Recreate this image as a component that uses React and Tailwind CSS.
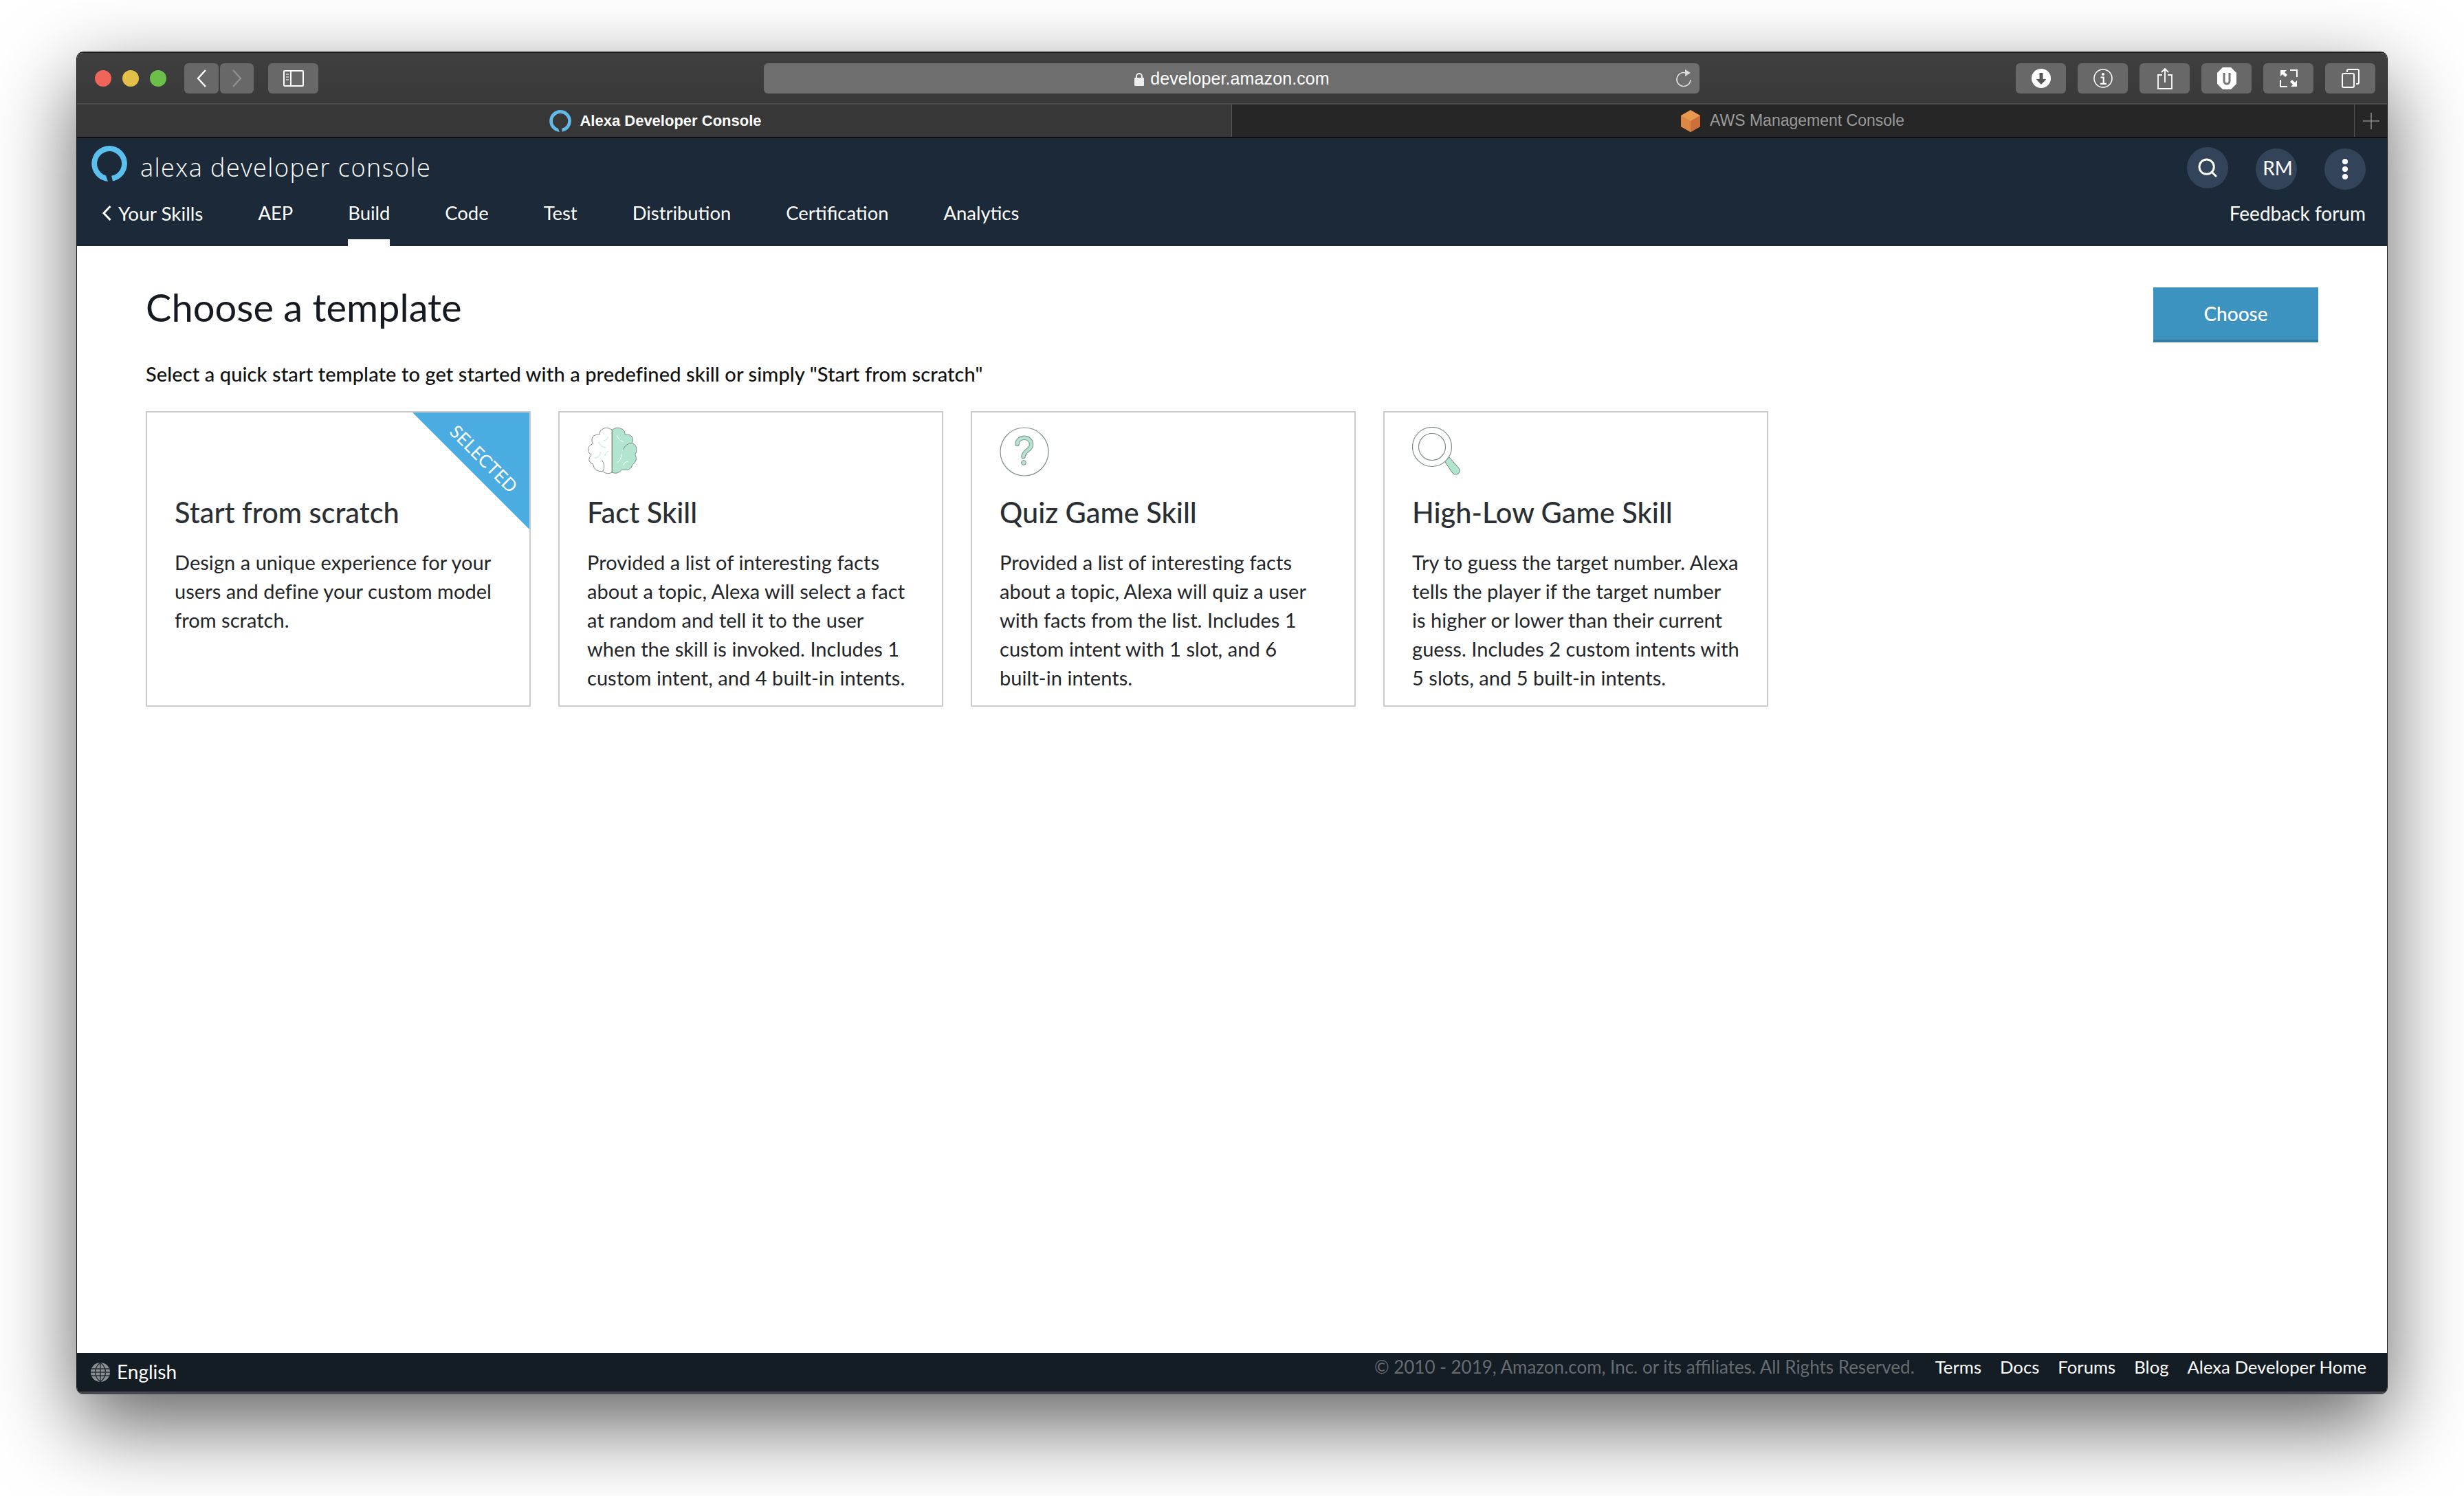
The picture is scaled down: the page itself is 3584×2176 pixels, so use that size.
import { Search } from 'lucide-react'

const NAV_ITEMS = ['AEP', 'Build', 'Code', 'Test', 'Distribution', 'Certification', 'Analytics']

const TEMPLATES = [
  {
    title: 'Start from scratch',
    selected: true,
    lines: ['Design a unique experience for your', 'users and define your custom model', 'from scratch.'],
  },
  {
    title: 'Fact Skill',
    icon: 'brain',
    lines: ['Provided a list of interesting facts', 'about a topic, Alexa will select a fact', 'at random and tell it to the user', 'when the skill is invoked. Includes 1', 'custom intent, and 4 built-in intents.'],
  },
  {
    title: 'Quiz Game Skill',
    icon: 'quiz',
    lines: ['Provided a list of interesting facts', 'about a topic, Alexa will quiz a user', 'with facts from the list. Includes 1', 'custom intent with 1 slot, and 6', 'built-in intents.'],
  },
  {
    title: 'High-Low Game Skill',
    icon: 'lens',
    lines: ['Try to guess the target number. Alexa', 'tells the player if the target number', 'is higher or lower than their current', 'guess. Includes 2 custom intents with', '5 slots, and 5 built-in intents.'],
  },
]

function AlexaRing({ className }) {
  return (
    <svg viewBox="0 0 52 52" className={className}>
      <path fill="currentColor" d="M26 0A26 26 0 0 1 31 51.500L29 43.800A18 18 0 1 0 21 43.300L24 51.900A26 26 0 0 1 26 0Z" />
    </svg>
  )
}

function BrainIcon() {
  return (
    <svg viewBox="160 95 222 208" className="h-[69px] w-[74px]">
      <path fill="#b2e5cf" stroke="#7f8c88" strokeWidth="3" d="M269 108 Q290 90 316 106 Q326 114 326 128 Q358 126 360 150 Q360 158 356 166 Q378 172 376 198 Q376 208 370 216 Q384 240 358 262 Q350 290 312 282 Q292 306 269 294 Z" />
      <path fill="#fff" stroke="#7f8c88" strokeWidth="3" d="M269 108 Q240 88 218 112 Q212 120 214 128 Q180 128 180 152 Q180 160 186 168 Q160 178 164 202 Q168 212 178 216 Q154 244 186 260 Q190 292 228 290 Q248 306 269 294 Z" />
      <path fill="none" stroke="#7f8c88" strokeWidth="3" d="M319 194 Q326 168 356 166 M228 290 Q242 264 224 240" />
      <path fill="none" stroke="#b2e5cf" strokeWidth="3" d="M232 154 Q246 154 252 138 M210 160 Q214 182 242 186 M218 204 Q218 228 192 232 M238 222 Q238 206 254 202" />
      <path fill="none" stroke="#fff" strokeWidth="3" d="M290 128 Q294 152 318 160 M310 214 Q310 242 292 250 M318 264 Q322 248 340 246" />
      <path fill="none" stroke="#7f8c88" strokeWidth="4" d="M269 106V296" />
    </svg>
  )
}

function QuizIcon() {
  return (
    <svg viewBox="0 0 72 72" className="h-[72px] w-[72px]">
      <circle cx="36" cy="36" r="35" fill="#fff" stroke="#7f8c88" strokeWidth="1.2" />
      <path fill="none" stroke="#7f8c88" strokeWidth="6.4" strokeLinecap="round" d="M25.5 25 C25.5 13 46 12 46 26 C46 34 35.5 34 34.5 43" />
      <path fill="none" stroke="#b2e5cf" strokeWidth="4.4" strokeLinecap="round" d="M25.5 25 C25.5 13 46 12 46 26 C46 34 35.5 34 34.5 43" />
      <circle cx="35" cy="52" r="3.4" fill="#b2e5cf" stroke="#7f8c88" strokeWidth="1" />
    </svg>
  )
}

function LensIcon() {
  return (
    <svg viewBox="0 0 72 72" className="h-[72px] w-[72px]">
      <path fill="#b2e5cf" stroke="#6f7f7a" strokeWidth="1" d="M46 48 L53 43 L68 60 Q71 64 67 68 Q62 71 58 66 Z" />
      <circle cx="29" cy="29" r="28.5" fill="#fff" stroke="#7f8c88" strokeWidth="1.2" />
      <circle cx="29" cy="29" r="19.5" fill="#fff" stroke="#7f8c88" strokeWidth="1.2" />
    </svg>
  )
}

function TemplateCard({ template }) {
  return (
    <div className="relative h-[430px] w-[560px] overflow-hidden border-2 border-[#cccccc] bg-white px-10 pt-[21px]">
      {template.selected && (
        <div className="absolute right-0 top-0 h-[170px] w-[170px] bg-[#4aace0] [clip-path:polygon(0_0,100%_0,100%_100%)]">
          <span className="absolute left-[19px] top-[54px] w-[170px] rotate-45 text-center text-[26px] leading-none tracking-[0.2px] text-white">SELECTED</span>
        </div>
      )}
      <div className="h-[72px]">
        {template.icon === 'brain' && <BrainIcon />}
        {template.icon === 'quiz' && <QuizIcon />}
        {template.icon === 'lens' && <LensIcon />}
      </div>
      <h3 className="mt-[28px] text-[41.5px] font-medium leading-[48px] text-[#2a2f33]">{template.title}</h3>
      <div className="mt-[28px] text-[29px] leading-[42px] tracking-[0.05px] text-[#1f2528]">
        {template.lines.map(line => (
          <p key={line} className="whitespace-nowrap">{line}</p>
        ))}
      </div>
    </div>
  )
}

function ToolButton({ children }) {
  return (
    <div className="flex h-[44px] w-[73px] items-center justify-center rounded-[6px] bg-[#686868]">
      {children}
    </div>
  )
}

export default function App() {
  return (
    <div className="h-[2176px] w-[3584px] overflow-hidden bg-white pl-[111px] pt-[75px] font-['Lato',sans-serif]">
      <div className="flex h-[1953px] w-[3362px] flex-col overflow-hidden rounded-[10px] border-x border-t-2 border-[#1a1a1a] shadow-[0_44px_120px_rgba(0,0,0,0.62)]">
        {/* safari toolbar */}
        <div className="flex h-[75px] shrink-0 items-center border-b-2 border-[#4c4c4c] bg-[linear-gradient(#3f3f3f,#393939)] pl-[26px] pr-[17px]">
          <div className="flex gap-[16px]">
            <span className="h-[24px] w-[24px] rounded-full bg-[#f0655a]" />
            <span className="h-[24px] w-[24px] rounded-full bg-[#e2bf49]" />
            <span className="h-[24px] w-[24px] rounded-full bg-[#6cbf48]" />
          </div>
          <div className="ml-[26px] flex gap-[2px]">
            <div className="flex h-[44px] w-[50px] items-center justify-center rounded-[6px] bg-[#686868]">
              <svg viewBox="0 0 16 26" className="h-[26px] w-[16px]"><path fill="none" stroke="#fff" strokeWidth="2.4" d="M14 1 3 13l11 12" /></svg>
            </div>
            <div className="flex h-[44px] w-[49px] items-center justify-center rounded-[6px] bg-[#686868]">
              <svg viewBox="0 0 16 26" className="h-[26px] w-[16px]"><path fill="none" stroke="#909090" strokeWidth="2.4" d="M2 1l11 12L2 25" /></svg>
            </div>
          </div>
          <div className="ml-[21px] flex h-[44px] w-[73px] items-center justify-center rounded-[6px] bg-[#686868]">
            <svg viewBox="0 0 30 24" className="h-[24px] w-[30px]">
              <rect x="1" y="1" width="28" height="22" rx="1" fill="none" stroke="#fff" strokeWidth="2" />
              <path stroke="#fff" strokeWidth="2" d="M11 1v22" />
              <path stroke="#bbb" strokeWidth="2" d="M4 6h4M4 10h4M4 14h4" />
            </svg>
          </div>
          <div className="relative ml-[648px] flex h-[44px] w-[1361px] items-center justify-center rounded-[6px] bg-[#6e6e6e] pt-[2px] text-[25px] tracking-[0.1px] text-white">
            <svg viewBox="0 0 16 20" className="mr-[8px] h-[20px] w-[16px]">
              <path fill="none" stroke="#eee" strokeWidth="2" d="M4 9V6a4 4 0 0 1 8 0v3" />
              <rect x="1" y="8" width="14" height="12" rx="1" fill="#eee" />
            </svg>
            <span className="font-['Liberation_Sans',sans-serif]">developer.amazon.com</span>
            <svg viewBox="0 0 24 26" className="absolute right-[11px] top-[9px] h-[26px] w-[24px]">
              <path fill="none" stroke="#ddd" strokeWidth="1.6" d="M15 5A10 10 0 1 0 22 15" />
              <path fill="#ddd" d="M14 0l8 5-8 5Z" />
            </svg>
          </div>
          <div className="ml-auto flex gap-[17px]">
            <ToolButton>
              <svg viewBox="0 0 28 28" className="h-[28px] w-[28px]">
                <circle cx="14" cy="14" r="14" fill="#fff" />
                <path fill="#555" d="M11.500 6h5v9h5L14 23l-7.500-8h5Z" />
              </svg>
            </ToolButton>
            <ToolButton>
              <svg viewBox="0 0 28 28" className="h-[28px] w-[28px]">
                <circle cx="14" cy="14" r="13" fill="none" stroke="#fff" strokeWidth="1.6" />
                <circle cx="14" cy="8" r="2" fill="#fff" />
                <path fill="none" stroke="#fff" strokeWidth="2.2" d="M10.500 12.500h4.200v9M10 21.800h9" />
              </svg>
            </ToolButton>
            <ToolButton>
              <svg viewBox="0 0 24 32" className="h-[32px] w-[24px]">
                <path fill="none" stroke="#fff" strokeWidth="1.8" d="M8 11H2v20h20V11h-6M12 22V2M7 7l5-5 5 5" />
              </svg>
            </ToolButton>
            <ToolButton>
              <svg viewBox="0 0 32 32" className="h-[32px] w-[32px]">
                <path fill="#fff" d="M10 0h12l8 8v16l-8 8H10l-8-8V8Z" />
                <path fill="none" stroke="#777" strokeWidth="3" d="M12 8v12a4 4 0 0 0 8 0V8" />
              </svg>
            </ToolButton>
            <ToolButton>
              <svg viewBox="0 0 26 26" className="h-[26px] w-[26px]">
                <path fill="none" stroke="#fff" strokeWidth="2" d="M15 1h10v10M11 25H1V15" />
                <path fill="#fff" d="M1 1h9L7 4l4 4-3 3-4-4-3 3ZM25 25h-9l3-3-4-4 3-3 4 4 3-3Z" />
              </svg>
            </ToolButton>
            <ToolButton>
              <svg viewBox="0 0 26 28" className="h-[28px] w-[26px]">
                <rect x="1" y="7" width="17" height="20" rx="2" fill="none" stroke="#fff" strokeWidth="2" />
                <path fill="none" stroke="#fff" strokeWidth="2" d="M8 5V3a2 2 0 0 1 2-2h13a2 2 0 0 1 2 2v17a2 2 0 0 1-2 2h-2" />
              </svg>
            </ToolButton>
          </div>
        </div>

        {/* tab strip */}
        <div className="flex h-[49px] shrink-0 items-stretch border-b-2 border-[#0e0e0e] bg-[#262626]">
          <div className="flex w-[1679px] items-center justify-center gap-[12px] bg-[#373737] pl-[4px] text-[22px] font-semibold text-white">
            <AlexaRing className="h-[32px] w-[32px] text-[#62b8e6]" />
            <span className="font-['Liberation_Sans',sans-serif]">Alexa Developer Console</span>
          </div>
          <div className="flex w-[1633px] items-center justify-center gap-[12px] border-l border-[#555] pr-[3px] text-[23px] text-[#9a9a9a]">
            <svg viewBox="0 0 32 32" className="h-[32px] w-[32px]">
              <path fill="#e99a4e" d="M16 0l14 8v16l-14 8-14-8V8Z" />
              <path fill="#cc6f3a" d="M16 16l14-8v16l-14 8Z" />
              <path fill="#dc8744" d="M16 16 2 8v16l14 8Z" />
            </svg>
            <span className="font-['Liberation_Sans',sans-serif]">AWS Management Console</span>
          </div>
          <div className="flex flex-1 items-center justify-center border-l border-[#555]">
            <svg viewBox="0 0 24 24" className="h-[24px] w-[24px]"><path stroke="#888" strokeWidth="1.600" d="M12 0v24M0 12h24" /></svg>
          </div>
        </div>

        {/* alexa header */}
        <div className="h-[157px] shrink-0 bg-[#1b2938] pl-[21px] pr-[31px] text-white">
          <div className="flex h-[93px] items-start pt-[11px]">
            <AlexaRing className="h-[52px] w-[52px] text-[#5bc0ee]" />
            <span className="ml-[19px] mt-[8px] font-['Open_Sans',sans-serif] text-[36px] font-light leading-[48px] tracking-[1.45px] text-white">alexa developer console</span>
            <div className="ml-auto flex items-center gap-[40px]">
              <div className="flex h-[60px] w-[60px] items-center justify-center rounded-full bg-[#33445a]">
                <Search size={32} strokeWidth={2.2} className="text-white" />
              </div>
              <div className="mt-[4px] flex h-[60px] w-[60px] items-center justify-center rounded-full bg-[#33445a] pb-[5px] pl-[4px] text-[28px]">RM</div>
              <div className="mt-[4px] flex h-[60px] w-[60px] flex-col items-center justify-center gap-[3px] rounded-full bg-[#33445a]">
                <span className="h-[8px] w-[8px] rounded-full bg-white" />
                <span className="h-[8px] w-[8px] rounded-full bg-white" />
                <span className="h-[8px] w-[8px] rounded-full bg-white" />
              </div>
            </div>
          </div>
          <div className="flex h-[64px] items-start text-[27.4px] leading-[32px]">
            <div className="ml-[15px] flex items-center">
              <svg viewBox="0 0 14 22" className="h-[22px] w-[14px]"><path fill="none" stroke="#fff" strokeWidth="3" d="M12.500 1 3 11l9.500 10" /></svg>
              <span className="ml-[10px] text-[27.9px]">Your Skills</span>
            </div>
            <div className="ml-[80px] flex gap-[80px]">
              {NAV_ITEMS.map(item => (
                <div key={item} className={item === 'Build' ? 'h-[64px] border-b-[10px] border-white' : ''}>{item}</div>
              ))}
            </div>
            <div className="ml-auto text-[28px]">Feedback forum</div>
          </div>
        </div>

        {/* main content */}
        <div className="flex-1 bg-white pl-[100px] pr-[100px] pt-[60px]">
          <div className="flex items-start justify-between">
            <h1 className="text-[56px] font-normal leading-[58px] text-[#16191f]">Choose a template</h1>
            <button className="h-[80px] w-[240px] border-b-4 border-[#357d9f] bg-[#3d93c0] text-[28px] font-medium text-white">Choose</button>
          </div>
          <p className="mt-[28px] text-[29px] font-medium leading-[36px] tracking-[0.1px] text-[#111]">Select a quick start template to get started with a predefined skill or simply "Start from scratch"</p>
          <div className="mt-[36px] flex gap-[40px]">
            {TEMPLATES.map(t => (
              <TemplateCard key={t.title} template={t} />
            ))}
          </div>
        </div>

        {/* footer */}
        <div className="flex h-[60px] shrink-0 border-b-[4px] border-[#45484d] bg-[#141c24] pl-[20px] pr-[30px] text-white">
          <div className="flex items-center gap-[10px] pb-[3px] text-[28px]">
            <svg viewBox="0 0 28 28" className="mt-[3px] h-[28px] w-[28px]">
              <circle cx="14" cy="14" r="14" fill="#8a8f94" />
              <path fill="none" stroke="#2b3036" strokeWidth="1.5" d="M0 9h28M0 14h28M0 19h28M14 0v28M14 0C4 8 4 20 14 28M14 0c10 8 10 20 0 28" />
            </svg>
            English
          </div>
          <div className="ml-auto mt-[4px] flex gap-[27px] text-[25.7px] leading-[32px]">
            <span className="mr-[3px] text-[26px] text-[#666c72]">© 2010 - 2019, Amazon.com, Inc. or its affiliates. All Rights Reserved.</span>
            <span>Terms</span>
            <span>Docs</span>
            <span>Forums</span>
            <span>Blog</span>
            <span>Alexa Developer Home</span>
          </div>
        </div>
      </div>
    </div>
  )
}
